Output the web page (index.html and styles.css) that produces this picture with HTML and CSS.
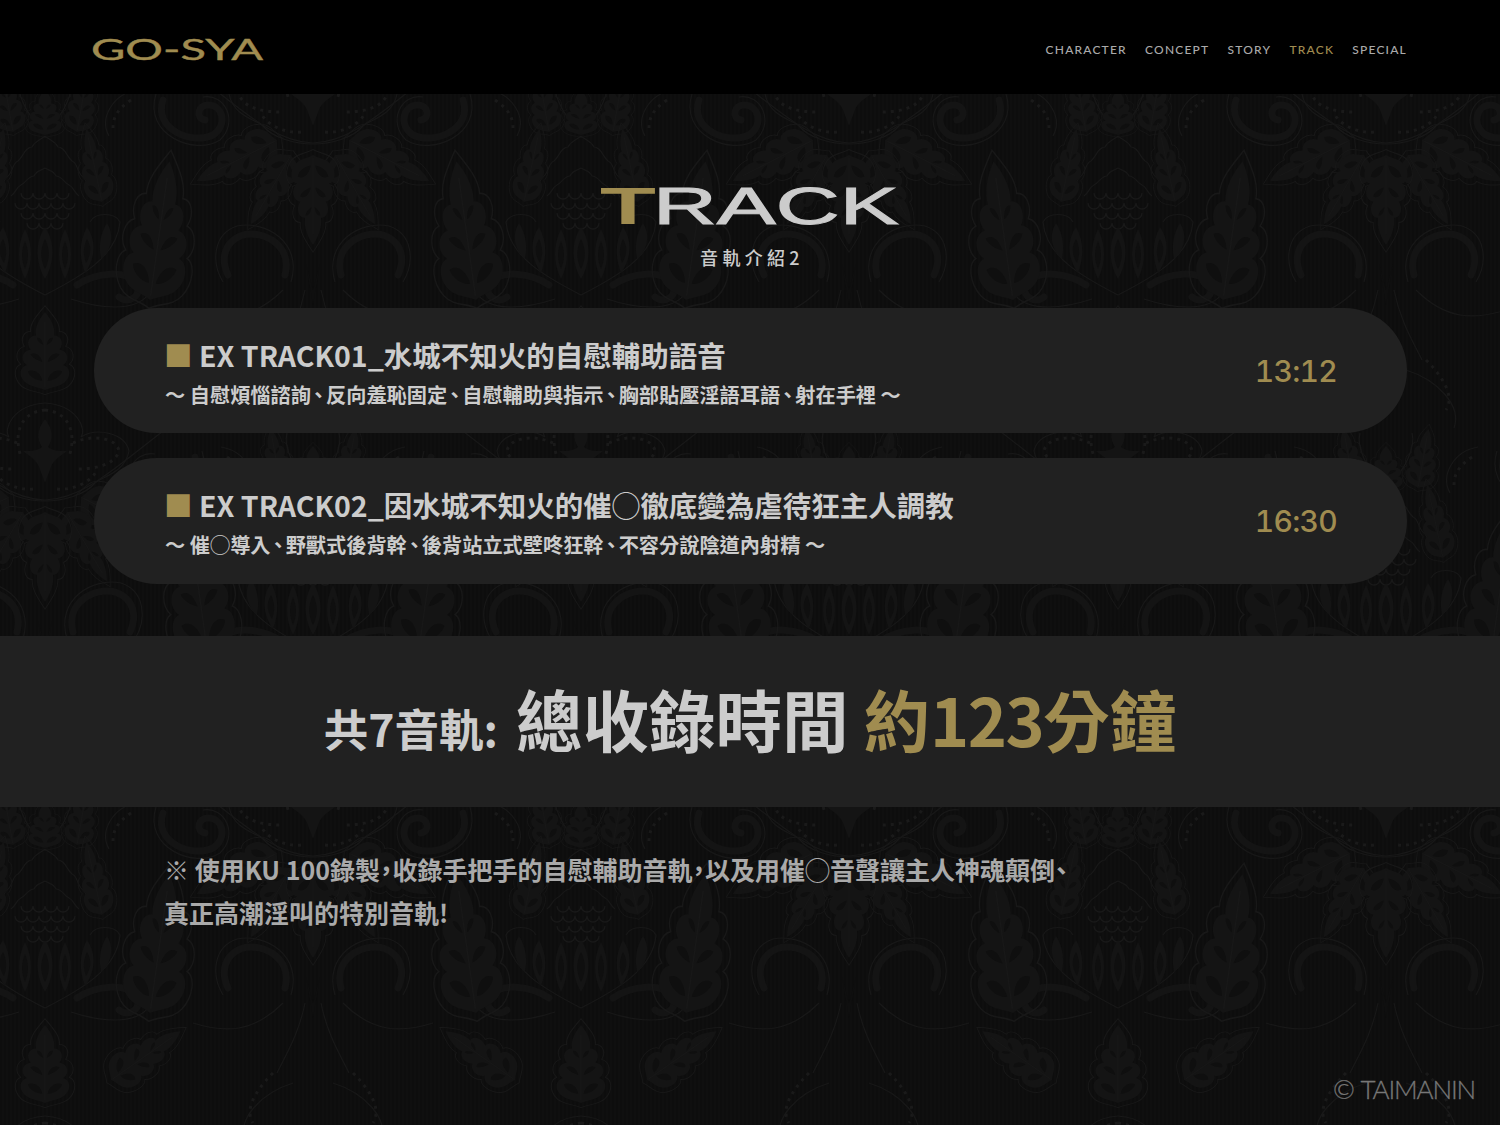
FILE: index.html
```html
<!DOCTYPE html>
<html lang="zh-Hant">
<head>
<meta charset="utf-8">
<title>GO-SYA TRACK</title>
<link rel="stylesheet" href="styles.css">
</head>
<body>
<svg class="damask" width="1500" height="1125" viewBox="0 0 1500 1125" aria-hidden="true">
  <defs>
    <pattern id="stripes" width="4" height="4" patternUnits="userSpaceOnUse">
      <rect width="4" height="4" class="stripe-a"/>
      <rect width="2" height="4" class="stripe-b"/>
    </pattern>
    <g id="leaf">
      <path class="m-fill" d="M0 0C-8-4-16-4-22-10C-30-18-28-30-20-32C-28-38-26-50-16-52C-22-60-18-70-10-70C-12-80-6-92 0-100C6-92 12-80 10-70C18-70 22-60 16-52C26-50 28-38 20-32C28-30 30-18 22-10C16-4 8-4 0 0Z"/>
      <path class="m-dark" d="M-3-12C-10-12-18-18-19-24C-12-27-5-22-3-12ZM3-12C10-12 18-18 19-24C12-27 5-22 3-12ZM-3-36C-9-38-15-42-16-46C-10-49-5-44-3-36ZM3-36C9-38 15-42 16-46C10-49 5-44 3-36ZM-2-58C-6-60-9-64-9-67C-5-68-3-63-2-58ZM2-58C6-60 9-64 9-67C5-68 3-63 2-58Z"/>
      <path class="m-line" d="M0-3V-88"/>
      <path class="m-line" d="M0 6C-10 1-20 2-27-6C-36-17-34-30-27-33C-34-40-32-53-23-56C-28-65-24-75-16-75C-17-86-8-97 0-108C8-97 17-86 16-75C24-75 28-65 23-56C32-53 34-40 27-33C34-30 36-17 27-6C20 2 10 1 0 6Z"/>
    </g>
    <g id="half">
      <path class="m-line" d="M0-71C6-66 10-66 13-60C20-60 22-50 27-46C33-44 32-34 38-30C43-26 41-20 46-14"/>
      <path class="m-line" d="M0-39C5-36 9-36 11-31C17-31 19-24 24-22C29-20 29-14 34-11"/>
      <path class="m-line" d="M0 88C35 70 72 50 75 15C70 5 50 5 45 15"/>
      <path class="m-fill" d="M20 22C12 38 12 56 20 72C28 56 28 38 20 22Z"/>
      <path class="m-dark" d="M20 34C16 44 16 52 20 62C24 52 24 44 20 34Z"/>
      <path class="m-fill" d="M42 20C34 34 34 50 40 66C50 52 52 34 42 20Z"/>
      <path class="m-dark" d="M42 32C38 40 38 48 41 56C46 48 47 40 42 32Z"/>
      <path class="m-fill" d="M62 16C54 28 54 42 56 52C66 44 70 28 62 16Z"/>
      <path class="m-thick" d="M32 78C50 66 80 62 92 76C98 88 84 98 74 90"/>
      <path class="m-line" d="M26 92C50 100 92 108 106 84C112 66 96 56 84 58"/>
      <path class="m-line" d="M6-82C18-92 30-116 26-130"/>
      <use href="#leaf" transform="translate(32 -75) rotate(10) scale(.55 .6)"/>
      <use href="#leaf" transform="translate(57 -5) rotate(-12) scale(.55 .75)"/>
      <use href="#leaf" transform="translate(105 93) rotate(8) scale(1.15 1.4)"/>
      <use href="#leaf" transform="translate(66 160) rotate(55) scale(.7 .85)"/>
      <use href="#leaf" transform="translate(36 290) rotate(117) scale(.75 .9)"/>
      <use href="#leaf" transform="translate(22 305) rotate(150) scale(.62 .8)"/>
      <path class="m-thick" d="M150 250C160 280 120 295 100 285C85 275 90 255 105 255C115 255 118 268 108 270"/>
      <path class="m-line" d="M157 244C170 285 118 306 93 290C74 272 88 243 110 247"/>
      <path class="m-dots" d="M182 250C194 258 200 266 200 278"/>
      <path class="m-line" d="M176 240C200 244 214 268 204 286"/>
      <path class="m-thick" d="M28 425C20 395 50 380 70 385C90 392 92 410 85 425"/>
      <path class="m-line" d="M22 432C10 392 48 370 76 376C100 384 102 412 90 432"/>
      <path class="m-line" d="M8 440C14 470 26 490 36 510M30 440C60 470 88 470 120 460"/>
      <path class="m-line" d="M0 293C40 292 70 260 130 215"/>
      <path class="m-dots" d="M0 203C24 205 32 226 24 250"/>
      <path class="m-dots" d="M28 236C50 226 72 232 74 244C70 258 50 262 32 262"/>
      <path class="m-dots" d="M12 282C30 284 50 272 52 262"/>
      <path class="m-line" d="M0 196C32 198 42 222 36 230C52 220 80 226 84 244C80 266 56 270 50 276C40 288 18 294 0 294"/>
      <path class="m-dots" d="M40 510C60 530 68 548 60 560"/>
      <path class="m-line" d="M20 520C52 530 76 556 68 578"/>
    </g>
    <g id="motif">
      <use href="#half"/>
      <use href="#half" transform="scale(-1 1)"/>
      <path class="m-scale" d="M-24-14a6 6 0 0 0 12 0a6 6 0 0 0 12 0a6 6 0 0 0 12 0a6 6 0 0 0 12 0M-30-4a6 6 0 0 0 12 0a6 6 0 0 0 12 0a6 6 0 0 0 12 0a6 6 0 0 0 12 0a6 6 0 0 0 12 0M-24 6a6 6 0 0 0 12 0a6 6 0 0 0 12 0a6 6 0 0 0 12 0a6 6 0 0 0 12 0M-18 16a6 6 0 0 0 12 0a6 6 0 0 0 12 0a6 6 0 0 0 12 0"/>
      <path class="m-fill" d="M0 20C-10 35-10 55 0 72C10 55 10 35 0 20Z"/>
      <path class="m-dark" d="M0 32C-5 42-5 52 0 62C5 52 5 42 0 32Z"/>
      <use href="#leaf" transform="translate(0 183) scale(.9 .78)"/>
      <use href="#leaf" transform="translate(0 305) rotate(180) scale(.8 .9)"/>
      <use href="#leaf" transform="translate(0 -72) scale(.62 .45)"/>
      <path class="m-fill" d="M0 212C-9 224-8 232-3 240C-8 244-14 244-22 244C-14 250-8 254-6 260L0 276L6 260C8 254 14 250 22 244C14 244 8 244 3 240C8 232 9 224 0 212Z"/>
      <path class="m-dark" d="M-7 414L0 455L7 414L0 440Z"/>
    </g>
  </defs>
  <rect width="1500" height="1125" class="damask-base"/>
  <rect width="1500" height="1125" fill="url(#stripes)"/>
  <use href="#motif" x="45" y="-506"/><use href="#motif" x="581" y="-506"/><use href="#motif" x="1118" y="-506"/>
  <use href="#motif" x="45" y="207"/><use href="#motif" x="581" y="207"/><use href="#motif" x="1118" y="207"/><use href="#motif" x="1654" y="207"/>
  <use href="#motif" x="45" y="920"/><use href="#motif" x="581" y="920"/><use href="#motif" x="1118" y="920"/><use href="#motif" x="1654" y="920"/>
  <use href="#motif" x="-223" y="-150"/><use href="#motif" x="313" y="-150"/><use href="#motif" x="849" y="-150"/><use href="#motif" x="1386" y="-150"/>
  <use href="#motif" x="-223" y="563"/><use href="#motif" x="313" y="563"/><use href="#motif" x="849" y="563"/><use href="#motif" x="1386" y="563"/>
</svg>

<header class="site-header">
  <div class="brand"><span class="brand-text">GO-SYA</span></div>
  <nav class="nav">
    <a class="nav-link">CHARACTER</a>
    <a class="nav-link">CONCEPT</a>
    <a class="nav-link">STORY</a>
    <a class="nav-link is-current">TRACK</a>
    <a class="nav-link">SPECIAL</a>
  </nav>
</header>

<main class="content">
  <section class="heading">
    <h1 class="heading-logo"><span class="logo-t">T</span><span class="logo-rest">RACK</span></h1>
    <p class="heading-sub">音軌介紹2</p>
  </section>

  <section class="tracks">
    <article class="track">
      <div class="track-body">
        <h2 class="track-title"><span class="gold">■</span> EX TRACK01_水城不知火的自慰輔助語音</h2>
        <p class="track-desc">〜 自慰煩惱諮詢<span class="punct">、</span>反向羞恥固定<span class="punct">、</span>自慰輔助與指示<span class="punct">、</span>胸部貼壓淫語耳語<span class="punct">、</span>射在手裡 〜</p>
      </div>
      <div class="track-time">13:12</div>
    </article>
    <article class="track">
      <div class="track-body">
        <h2 class="track-title"><span class="gold">■</span> EX TRACK02_因水城不知火的催◯徹底變為虐待狂主人調教</h2>
        <p class="track-desc">〜 催◯導入<span class="punct">、</span>野獸式後背幹<span class="punct">、</span>後背站立式壁咚狂幹<span class="punct">、</span>不容分說陰道內射精 〜</p>
      </div>
      <div class="track-time">16:30</div>
    </article>
  </section>

  <section class="total">
    <span class="total-small">共7音軌:</span>
    <span class="total-big">總收錄時間</span>
    <span class="total-big total-gold gold">約<span class="digits">123</span>分鐘</span>
  </section>

  <p class="note">※ 使用KU 100錄製&#xFF0C;收錄手把手的自慰輔助音軌&#xFF0C;以及用催◯音聲讓主人神魂顛倒、<br>真正高潮淫叫的特別音軌!</p>
</main>

<div class="copyright">© TAIMANIN</div>
</body>
</html>
```

FILE: styles.css
```css
* { box-sizing: border-box; }
html, body { margin: 0; padding: 0; }
body {
  position: relative;
  width: 1500px;
  height: 1125px;
  overflow: hidden;
  background: #0e0e0e;
  color: #cccccc;
  font-family: "Noto Sans CJK TC", "Noto Sans", sans-serif;
  font-feature-settings: "palt";
}

/* damask wallpaper */
.damask { position: absolute; top: 0; left: 0; z-index: 0; display: block; }
.damask-base { fill: #0e0e0e; }
.stripe-a { fill: #0f0f0f; }
.stripe-b { fill: #0d0d0d; }
.m-fill { fill: #141414; stroke: none; }
.m-dark { fill: #0f0f0f; stroke: none; }
.m-line { fill: none; stroke: #181818; stroke-width: 1.2; }
.m-thick { fill: none; stroke: #141414; stroke-width: 7; stroke-linecap: round; }
.m-dots { fill: none; stroke: #1a1a1a; stroke-width: 3; stroke-dasharray: 3 5; }
.m-scale { fill: none; stroke: #191919; stroke-width: 1.3; }

/* header */
.site-header {
  position: relative;
  z-index: 1;
  display: flex;
  align-items: center;
  justify-content: space-between;
  height: 94px;
  padding: 4px 93px 0 91px;
  background: #000000;
}
.brand { width: 171px; height: 30px; }
.brand-text {
  display: inline-block;
  font-family: "Lato", sans-serif;
  font-size: 29px;
  line-height: 30px;
  font-weight: 400;
  color: #a08c50;
  -webkit-text-stroke: .4px #a08c50;
  white-space: nowrap;
  transform: scaleX(1.62);
  transform-origin: left center;
}
.nav { display: flex; gap: 18.2px; }
.nav-link {
  font-family: "Lato", sans-serif;
  font-size: 12px;
  font-weight: 500;
  letter-spacing: 1.2px;
  color: #aaaaaa;
}
.nav-link.is-current { color: #a08c50; }

/* main */
.content { position: relative; z-index: 1; }
.heading {
  display: flex;
  flex-direction: column;
  align-items: center;
  padding-top: 92px;
}
.heading-logo {
  display: flex;
  width: 300px;
  height: 40px;
  margin: 0;
  font-family: "Liberation Sans", sans-serif;
  font-size: 52px;
  line-height: 40px;
  white-space: nowrap;
}
.logo-t {
  display: block;
  width: 53px;
  font-weight: 700;
  color: #a08c50;
  transform: scaleX(1.76);
  transform-origin: left center;
}
.logo-rest {
  display: block;
  font-weight: 400;
  color: #cccccc;
  -webkit-text-stroke: 1px #cccccc;
  transform: scaleX(1.7);
  transform-origin: left center;
}
.heading-sub {
  margin: 18px 0 0 4px;
  font-size: 18px;
  line-height: 26px;
  font-weight: 500;
  letter-spacing: 4.3px;
  color: #cccccc;
}

.tracks {
  display: flex;
  flex-direction: column;
  gap: 25px;
  margin: 38px 93px 0 94px;
}
.track {
  display: flex;
  align-items: center;
  justify-content: space-between;
  height: 125px;
  padding: 3px 70px 0 70px;
  border-radius: 63px;
  background: #212121;
}
.track:last-child { height: 126px; }
.track-title {
  margin: 0;
  font-size: 28.5px;
  line-height: 42px;
  font-weight: 700;
  color: #cccccc;
}
.track-desc {
  margin: 3px 0 0 1px;
  font-size: 20.2px;
  line-height: 32px;
  font-weight: 700;
  color: #cccccc;
}
.punct { margin: 0 2.5px; }
.track-time {
  padding-bottom: 3px;
  font-family: "Inter", sans-serif;
  font-size: 30px;
  font-weight: 500;
  font-feature-settings: "tnum";
  letter-spacing: -.7px;
  color: #a08c50;
}

.total {
  display: flex;
  align-items: baseline;
  justify-content: center;
  gap: 18px;
  height: 171px;
  margin-top: 52px;
  padding-top: 34px;
  background: #212121;
  font-weight: 700;
  line-height: 96px;
}
.total-small { font-size: 44.5px; }
.total-big { font-size: 66.5px; }
.total-gold { margin-left: -3px; }
.digits { letter-spacing: -1.5px; }
.gold { color: #a08c50; }

.note {
  margin: 41px 0 0;
  padding-left: 164px;
  font-size: 25px;
  line-height: 43px;
  font-weight: 700;
  color: #aaaaaa;
}

.copyright {
  position: absolute;
  right: 25px;
  bottom: 21px;
  z-index: 1;
  font-family: "Lato", sans-serif;
  font-size: 26px;
  font-weight: 300;
  letter-spacing: -1.15px;
  word-spacing: 1.5px;
  line-height: 30px;
  color: #777777;
  -webkit-text-stroke: .3px #777777;
}
```
